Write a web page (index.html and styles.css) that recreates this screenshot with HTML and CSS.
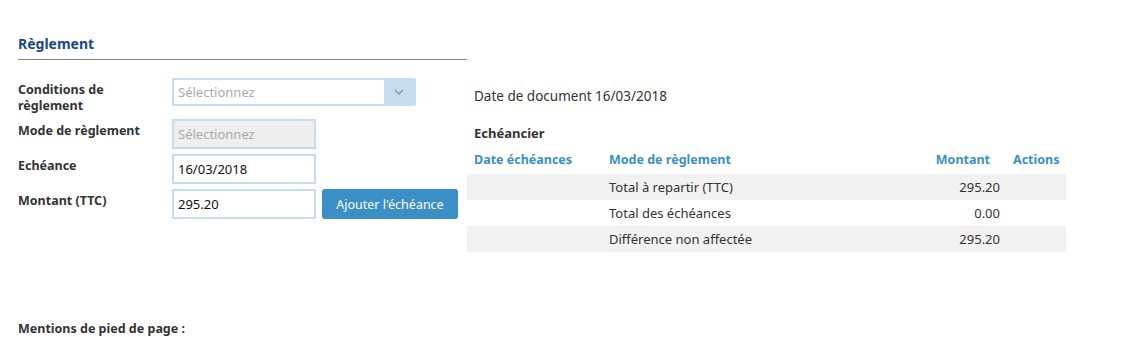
FILE: index.html
```html
<!DOCTYPE html>
<html lang="fr">
<head>
    <meta charset="UTF-8">
    <title>Règlement</title>
    <link rel="stylesheet" href="styles.css">
</head>
<body>
    <div class="page">
        <section class="reglement">
            <h2>Règlement</h2>
            <div class="form">
                <label class="lbl">Conditions de règlement</label>
                <div class="select">
                    <span class="placeholder">Sélectionnez</span>
                    <span class="arrow">
                        <svg width="10" height="6" viewBox="0 0 10 6"><path d="M1 1 L5 5 L9 1" fill="none" stroke="#8a9aa8" stroke-width="1.4"/></svg>
                    </span>
                </div>

                <label class="lbl">Mode de règlement</label>
                <div class="field disabled short"><span class="placeholder">Sélectionnez</span></div>

                <label class="lbl">Echéance</label>
                <div class="field short">16/03/2018</div>

                <label class="lbl">Montant (TTC)</label>
                <div class="inline">
                    <div class="field short">295.20</div>
                    <button class="btn">Ajouter l'échéance</button>
                </div>
            </div>
        </section>

        <section class="echeancier">
            <p class="docdate">Date de document 16/03/2018</p>
            <h3>Echéancier</h3>
            <table>
                <thead>
                    <tr>
                        <th class="c-date">Date échéances</th>
                        <th class="c-mode">Mode de règlement</th>
                        <th class="c-mnt">Montant</th>
                        <th class="c-act">Actions</th>
                    </tr>
                </thead>
                <tbody>
                    <tr class="alt">
                        <td></td>
                        <td>Total à repartir (TTC)</td>
                        <td class="num">295.20</td>
                        <td></td>
                    </tr>
                    <tr>
                        <td></td>
                        <td>Total des échéances</td>
                        <td class="num">0.00</td>
                        <td></td>
                    </tr>
                    <tr class="alt">
                        <td></td>
                        <td>Différence non affectée</td>
                        <td class="num">295.20</td>
                        <td></td>
                    </tr>
                </tbody>
            </table>
        </section>
    </div>

    <p class="mentions">Mentions de pied de page :</p>
</body>
</html>
```

FILE: styles.css
```css
:root {
--blue: #3a8fc7;
--pale: #c6dcef;
--text: #333;
}

body {
margin: 0;
padding: 0 18px;
font-family: "Noto Sans", sans-serif;
font-size: 13px;
color: var(--text);
}

.page {
display: flex;
align-items: flex-start;
}

.reglement {
width: 449px;
}

h2 {
margin: 0;
padding-top: 34px;
padding-bottom: 5px;
font-size: 14px;
line-height: 20px;
color: #174a85;
border-bottom: 1px solid #888;
}

.form {
display: grid;
grid-template-columns: 154px 1fr;
row-gap: 5px;
margin-top: 18px;
}

.lbl {
font-weight: bold;
font-size: 12.5px;
line-height: 16px;
padding-top: 4px;
max-width: 134px;
}

.select {
display: flex;
width: 244px;
height: 28px;
box-sizing: border-box;
border: 2px solid var(--pale);
border-radius: 2px;
}

.placeholder {
color: #aaa;
}

.select .placeholder {
flex: 1;
padding: 0 4px;
line-height: 24px;
}

.arrow {
width: 30px;
background: var(--pale);
display: flex;
align-items: center;
justify-content: center;
}

.field {
box-sizing: border-box;
height: 30px;
border: 2px solid var(--pale);
padding: 0 4px;
line-height: 26px;
color: #111;
}

.short {
width: 144px;
}

.disabled {
background: #eee;
}

.inline {
display: flex;
gap: 6px;
}

.btn {
height: 30px;
width: 136px;
border: 0;
border-radius: 3px;
background: var(--blue);
color: #fff;
font-family: inherit;
font-size: 12.5px;
padding: 0;
}

.echeancier {
width: 599px;
margin-top: 86px;
}

.docdate {
margin: 0 0 18px 7px;
line-height: 20px;
font-size: 13.5px;
}

h3 {
margin: 0 0 9px 7px;
font-size: 13px;
line-height: 18px;
}

table {
width: 100%;
border-collapse: collapse;
}

th {
color: var(--blue);
text-align: left;
font-size: 12.5px;
line-height: 18px;
padding: 0 0 5px;
}

td {
height: 26px;
padding: 0;
}

.c-date {
width: 135px;
padding-left: 7px;
}

.c-mnt {
text-align: right;
width: 60px;
padding-right: 10px;
}

.c-act {
width: 53px;
padding-left: 13px;
}

.alt td {
background: #f1f1f1;
}

.num {
text-align: right;
}

.mentions {
margin: 68px 0 0;
font-weight: bold;
font-size: 12.5px;
}
```
